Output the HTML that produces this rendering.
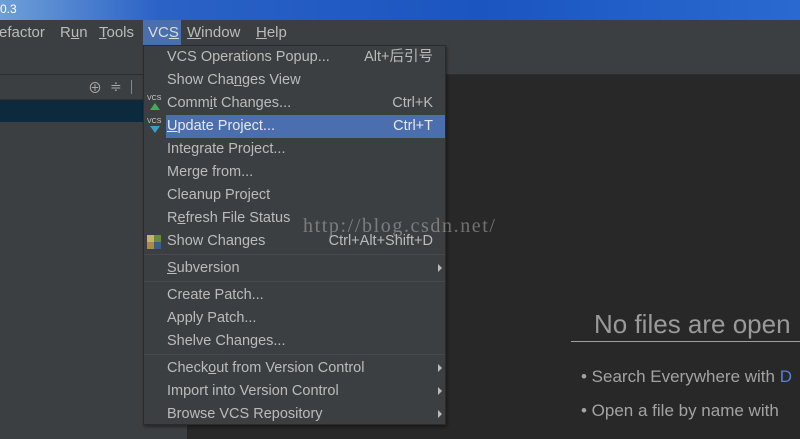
<!DOCTYPE html>
<html><head><meta charset="utf-8">
<style>
*{margin:0;padding:0;box-sizing:border-box}
body{width:800px;height:439px;overflow:hidden;background:#282828;font-family:"Liberation Sans","Noto Sans CJK SC",sans-serif;position:relative;color:#bbb}
.abs{position:absolute}
#title{left:0;top:0;width:800px;height:20px;background:linear-gradient(90deg,#6f9fd8 0,#2a62c6 20%,#1b55c0 60%,#2a6ad0 100%);color:#fff;font-size:12px;line-height:18px;padding-left:0}
#menubar{left:0;top:20px;width:800px;height:25px;background:#3c3f41;font-size:15px;line-height:25px;color:#bbb}
#menubar span{position:absolute;top:0}
#toolbar{left:0;top:45px;width:800px;height:30px;background:#3c3f41;border-bottom:1px solid #2d2f30}
#left{left:0;top:75px;width:187px;height:364px;background:#3c3f41}
#hdr{left:0;top:76px;width:187px;height:24px;background:#3c3f41;border-bottom:1px solid #323232}
#sel{left:0;top:100px;width:187px;height:22px;background:#0d293e}
#menu{left:143px;top:45px;width:303px;height:380px;background:#3c3f41;border:1px solid #2b2b2b;box-shadow:1px 2px 3px rgba(0,0,0,.4)}
.it{position:absolute;left:0;width:301px;height:23px;font-size:14.5px;line-height:23px;color:#bbb}
.it .t{position:absolute;left:23px}
.it .k{position:absolute;right:12px}
.it.h{background:#4b6eaf;left:22px;width:279px;color:#e8e8e8}
.it.h .t{left:1px}
.sep{position:absolute;left:0;width:301px;height:1px;background:#2f3133;border-bottom:1px solid #48494b}
.arr{position:absolute;right:3px;top:7px;width:0;height:0;border-left:4px solid #bbb;border-top:4px solid transparent;border-bottom:4px solid transparent}
u{text-decoration:underline}
#nf{left:594px;top:309px;font-size:26px;color:#9a9a9a}
#nl{left:571px;top:341px;width:229px;height:1px;background:#a0a0a0}
.b{font-size:17px;color:#a3a3a3}
#wm{left:303px;top:215px;font-family:"Liberation Serif",serif;font-size:20px;color:rgba(200,200,200,.45);letter-spacing:1.6px}
.vcs{position:absolute;left:3px;font-size:7px;color:#ccc;line-height:8px}
</style></head><body>
<div id="title" class="abs">0.3</div>
<div id="menubar" class="abs">
<span style="left:-1px">efactor</span>
<span style="left:60px">R<u>u</u>n</span>
<span style="left:99px"><u>T</u>ools</span>
<span style="left:143px;width:38px;background:#4b6eaf;padding-left:5px;color:#ddd">VC<u>S</u></span>
<span style="left:187px"><u>W</u>indow</span>
<span style="left:256px"><u>H</u>elp</span>
</div>
<div id="toolbar" class="abs"></div>
<div id="left" class="abs"></div>
<div id="hdr" class="abs"><span class="abs" style="left:88px;top:2px;font-size:14px;color:#aaa">⊕</span><span class="abs" style="left:110px;top:2px;font-size:14px;color:#aaa">≑</span><span class="abs" style="left:131px;top:4px;width:1px;height:14px;background:#888"></span></div>
<div id="sel" class="abs"></div>
<div id="nf" class="abs">No files are open</div>
<div id="nl" class="abs"></div>
<div class="abs b" style="left:581px;top:367px">• Search Everywhere with <span style="color:#5a7fd6">D</span></div>
<div class="abs b" style="left:581px;top:401px">• Open a file by name with</div>
<div id="menu" class="abs">
<div class="it" style="top:0"><span class="t">VCS Operations Popup...</span><span class="k">Alt+后引号</span></div>
<div class="it" style="top:23px"><span class="t">Show Cha<u>n</u>ges View</span></div>
<div class="it" style="top:46px"><span class="vcs" style="top:3px">VCS<br><span style="display:inline-block;margin-left:3px;width:0;height:0;border-left:5px solid transparent;border-right:5px solid transparent;border-bottom:7px solid #3fae5a"></span></span><span class="t">Comm<u>i</u>t Changes...</span><span class="k">Ctrl+K</span></div>
<div class="it h" style="top:69px"><span class="t"><u>U</u>pdate Project...</span><span class="k">Ctrl+T</span></div>
<div class="it" style="top:69px;width:22px"><span class="vcs" style="top:3px">VCS<br><span style="display:inline-block;margin-left:3px;width:0;height:0;border-left:5px solid transparent;border-right:5px solid transparent;border-top:7px solid #3a9fc4"></span></span></div>
<div class="it" style="top:92px"><span class="t">Integrate Project...</span></div>
<div class="it" style="top:115px"><span class="t">Merge from...</span></div>
<div class="it" style="top:138px"><span class="t">Cleanup Project</span></div>
<div class="it" style="top:161px"><span class="t">R<u>e</u>fresh File Status</span></div>
<div class="it" style="top:184px"><span style="position:absolute;left:3px;top:5px;width:14px;height:14px;background:conic-gradient(#6a8a3a 0 25%,#3a5d8a 25% 50%,#b08848 50% 75%,#c9b36a 75%)"></span><span class="t">Show Changes</span><span class="k">Ctrl+Alt+Shift+D</span></div>
<div class="sep" style="top:208px"></div>
<div class="it" style="top:211px"><span class="t"><u>S</u>ubversion</span><span class="arr"></span></div>
<div class="sep" style="top:235px"></div>
<div class="it" style="top:238px"><span class="t">Create Patch...</span></div>
<div class="it" style="top:261px"><span class="t">Apply Patch...</span></div>
<div class="it" style="top:284px"><span class="t">Shelve Changes...</span></div>
<div class="sep" style="top:308px"></div>
<div class="it" style="top:311px"><span class="t">Check<u>o</u>ut from Version Control</span><span class="arr"></span></div>
<div class="it" style="top:334px"><span class="t">Import into Version Control</span><span class="arr"></span></div>
<div class="it" style="top:357px"><span class="t">Browse VCS Repository</span><span class="arr"></span></div>
</div>
<div id="wm" class="abs">http://blog.csdn.net/</div>
</body></html>
